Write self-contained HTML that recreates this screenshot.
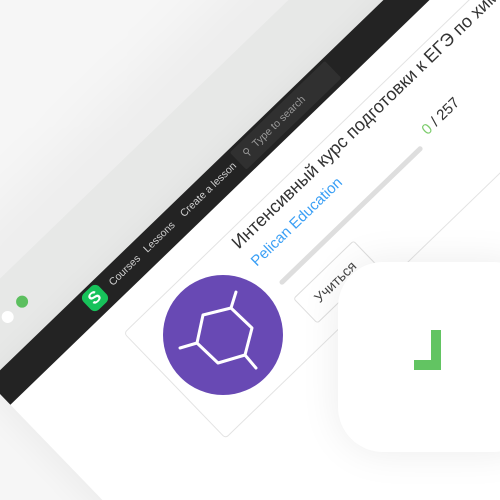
<!DOCTYPE html>
<html><head><meta charset="utf-8"><style>
html,body{margin:0;padding:0;width:500px;height:500px;overflow:hidden;background:#fff;font-family:"Liberation Sans","Noto Sans CJK SC",sans-serif}
#w{position:relative;width:500px;height:500px;overflow:hidden;background:#f6f6f6}
#r{position:absolute;left:95px;top:298px;width:0;height:0;transform:rotate(-44deg);transform-origin:0 0}
#r div{position:absolute}
.page{left:-135px;top:-14px;width:1200px;height:1200px;background:#fff;box-shadow:-10px 0 30px rgba(0,0,0,0.04)}
.chrome{left:-135px;top:-80px;width:1200px;height:66px;background:#e7e8e7;box-shadow:0 -40px 70px rgba(0,0,0,0.05)}
.nav{left:-135px;top:-14px;width:1200px;height:32px;background:#232323}
.dot{width:12px;height:12px;border-radius:50%}
.nt{color:#cfcfcf;font-size:10.5px;top:-5px;white-space:nowrap}
.card{left:-4px;top:45px;width:900px;height:145px;border:1px solid #e3e3e3;border-radius:4px;background:#fff}
</style></head><body><div id="w">
<div id="r">
  <div class="chrome"></div>
  <div class="page"></div>
  <div class="nav"></div>
  <div class="dot" style="left:-61px;top:-54px;background:#5cbf5f"></div>
  <div class="dot" style="left:-82px;top:-53px;background:#fff"></div>
  <div style="left:-11px;top:-11px;width:22px;height:22px;border-radius:6px;background:#17c25a;color:#fff;font-weight:bold;font-size:17px;line-height:22px;text-align:center">S</div>
  <div class="nt" style="left:21px">Courses</div>
  <div class="nt" style="left:69px">Lessons</div>
  <div class="nt" style="left:120px">Create a lesson</div>
  <div style="left:198px;top:-11px;width:132px;height:24px;background:#303030;border-radius:2px"></div>
  <div class="nt" style="left:207px;top:-5px;color:#999">&#9906;&nbsp; Type to search</div>
  <div class="card"></div>
  <div style="left:137px;top:49px;font-size:18px;color:#333;white-space:nowrap">Интенсивный курс подготовки к ЕГЭ по химии</div>
  <div style="left:138px;top:77px;font-size:15px;color:#3a9ff5;white-space:nowrap">Pelican Education</div>
  <div style="left:143px;top:116px;width:197px;height:5px;background:#dedede;border-radius:3px"></div>
  <div style="left:352px;top:101px;font-size:15px;color:#333;white-space:nowrap"><span style="color:#7ccc6c">0</span> / 257</div>
  <div style="left:142px;top:138px;width:82px;height:33px;border:1px solid #ddd;border-radius:3px;background:#fff;font-size:14px;color:#444;line-height:33px;text-align:center">Учиться</div>
</div>
<svg style="position:absolute;left:0;top:0" width="500" height="500">
  <circle cx="223" cy="335" r="60" fill="#6849b4"/>
  <g stroke="#fff" stroke-width="3" fill="none" stroke-linecap="round" stroke-linejoin="round">
    <path d="M231 308 L203 315 L197 343 L218 363 L245 355 L252 328 Z"/>
    <path d="M231 308 L236 292 M197 343 L180 348 M245 355 L256 368"/>
  </g>
</svg>
<div style="position:absolute;left:338px;top:262px;width:200px;height:190px;border-radius:45px;background:#fff;box-shadow:0 0 40px rgba(0,0,0,0.08)"></div>
<div style="position:absolute;left:431px;top:330px;width:10px;height:40px;background:#62c462"></div>
<div style="position:absolute;left:414px;top:360px;width:27px;height:10px;background:#62c462"></div>
</div></body></html>
